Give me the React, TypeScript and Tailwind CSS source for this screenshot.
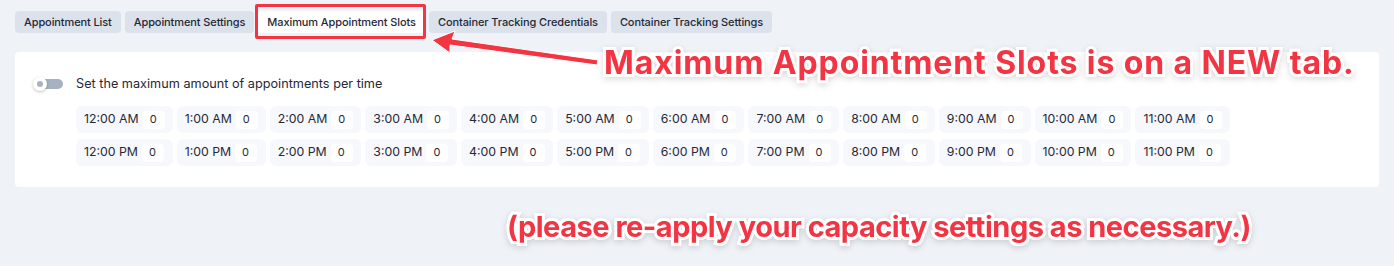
const tabs = [
  "Appointment List",
  "Appointment Settings",
  "Maximum Appointment Slots",
  "Container Tracking Credentials",
  "Container Tracking Settings",
];

const hours = ["12", "1", "2", "3", "4", "5", "6", "7", "8", "9", "10", "11"];

function Slot({ label }: { label: string }) {
  return (
    <div className="flex items-center gap-[4px] rounded-md bg-[#f7f8fc] pl-2 pr-2 h-[27px]">
      <span className="text-[12.3px] text-[#1f2937] whitespace-nowrap">{label}</span>
      <span className="flex h-[18px] w-[22px] items-center rounded bg-white pl-[7px] text-[11px] text-[#1f2937]">0</span>
    </div>
  );
}

export default function App() {
  return (
    <div className="relative h-[266px] w-full overflow-hidden bg-[#eff2f7] px-[15px] pt-[11px] font-['Inter',sans-serif]">
      <div className="flex gap-1">
        {tabs.map((t, i) => (
          <div
            key={t}
            className={
              i === 2
                ? "relative flex h-[22px] items-center rounded bg-white px-[9px] text-[11px] font-medium tracking-[-0.1px] text-[#1f2937]"
                : "flex h-[22px] items-center rounded bg-[#dce2eb] px-[9px] text-[11px] font-medium tracking-[-0.1px] text-[#1f2937]"
            }
          >
            {t}
            {i === 2 && (
              <span className="absolute -left-[3px] -right-[1px] -top-[7px] -bottom-[6px] rounded-[2px] border-[3px] border-[#f23443]" />
            )}
          </div>
        ))}
      </div>

      <div className="mt-[19px] rounded bg-white pl-[18px] pr-5 pt-5 pb-[21px]">
        <div className="flex h-6 items-center gap-[13px]">
          <div className="relative h-[10px] w-[30px]">
            <div className="absolute left-[4px] top-0 h-[10px] w-[26px] rounded-full bg-[#a6b1c2]" />
            <div className="absolute left-0 -top-[2px] flex h-[14px] w-[14px] items-center justify-center rounded-full bg-white shadow-[0_1px_3px_rgba(0,0,0,0.25)]">
              <div className="h-[6px] w-[6px] rounded-full bg-[#a6b1c2]" />
            </div>
          </div>
          <span className="text-[12.7px] text-[#1f2937]">Set the maximum amount of appointments per time</span>
        </div>
        <div className="ml-[43px] mt-[10px] grid w-fit grid-cols-[repeat(12,max-content)] gap-x-1 gap-y-1.5">
          {hours.map((h) => (
            <Slot key={h + "am"} label={`${h}:00 AM`} />
          ))}
          {hours.map((h) => (
            <Slot key={h + "pm"} label={`${h}:00 PM`} />
          ))}
        </div>
      </div>

      <svg className="pointer-events-none absolute left-0 top-0" width="1394" height="266">
        <polygon points="432,40 455,31 452,39 598,60 597,65 450,45 450,53" fill="#f23443" stroke="white" strokeWidth="1" strokeLinejoin="round" />
      </svg>

      <div className="pointer-events-none absolute left-[604px] top-[47px] whitespace-nowrap text-[32px] font-bold leading-none tracking-[0.9px] text-[#f23443] [-webkit-text-stroke:6px_white] [paint-order:stroke_fill] drop-shadow-[0_2px_3px_rgba(0,0,0,0.15)]">
        Maximum Appointment Slots is on a NEW tab.
      </div>
      <div className="pointer-events-none absolute left-[507px] top-[212px] whitespace-nowrap text-[29px] font-bold leading-none tracking-[-0.5px] text-[#f23443] [-webkit-text-stroke:6px_white] [paint-order:stroke_fill] drop-shadow-[0_2px_3px_rgba(0,0,0,0.15)]">
        (please re-apply your capacity settings as necessary.)
      </div>
    </div>
  );
}
